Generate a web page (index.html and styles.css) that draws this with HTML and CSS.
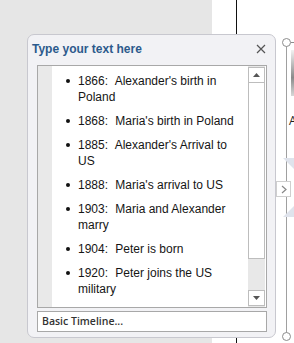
FILE: index.html
```html
<!DOCTYPE html>
<html lang="en">
<head>
  <meta charset="UTF-8" />
  <title>Text Pane - Basic Timeline</title>
  <link rel="stylesheet" href="styles.css">
</head>
<body>

  <div class="stage">
    <div class="page-edge"></div>

    <!-- bits of the SmartArt shape behind the pane -->
    <div class="frame-line"></div>
    <span class="handle handle-top"></span>
    <span class="handle handle-bottom"></span>
    <span class="handle-tick"></span>
    <div class="shade"></div>
    <span class="shape-letter">A</span>
    <svg class="wedge wedge-top" width="11" height="11" viewBox="0 0 11 11"><polygon points="0,0 11,0 11,11" fill="#dfe3ec"/></svg>
    <svg class="wedge wedge-bottom" width="11" height="11" viewBox="0 0 11 11"><polygon points="11,0 11,11 0,11" fill="#dfe3ec"/></svg>
    <div class="pane-toggle">
      <svg width="6" height="9" viewBox="0 0 6 9"><polyline points="1,1 5,4.5 1,8" fill="none" stroke="#888" stroke-width="1.2"/></svg>
    </div>

    <div class="pane">
      <div class="pane-head">
        <h1>Type your text here</h1>
        <button class="close" title="Close">
          <svg width="10" height="10" viewBox="0 0 10 10"><path d="M1 1 L9 9 M9 1 L1 9" stroke="#555" stroke-width="1.2" fill="none"/></svg>
        </button>
      </div>

      <div class="editor">
        <div class="gutter"></div>
        <ul class="bullets">
          <li><span class="yr">1866:</span> Alexander's birth in Poland</li>
          <li><span class="yr">1868:</span> Maria's birth in Poland</li>
          <li><span class="yr">1885:</span> Alexander's Arrival to US</li>
          <li><span class="yr">1888:</span> Maria's arrival to US</li>
          <li><span class="yr">1903:</span> Maria and Alexander marry</li>
          <li><span class="yr">1904:</span> Peter is born</li>
          <li><span class="yr">1920:</span> Peter joins the US military</li>
        </ul>
        <div class="scroll">
          <div class="arrow">
            <svg width="7" height="4" viewBox="0 0 7 4"><polygon points="0,4 7,4 3.5,0" fill="#555"/></svg>
          </div>
          <div class="thumb"></div>
          <div class="track"></div>
          <div class="arrow">
            <svg width="7" height="4" viewBox="0 0 7 4"><polygon points="0,0 7,0 3.5,4" fill="#555"/></svg>
          </div>
        </div>
      </div>

      <div class="layout-name">Basic Timeline...</div>
    </div>
  </div>

</body>
</html>
```

FILE: styles.css
```css
* {
  box-sizing: border-box;
}
body {
  margin: 0;
  font-family: "Open Sans", "Noto Sans", sans-serif;
}
.stage {
  position: relative;
  width: 294px;
  height: 343px;
  overflow: hidden;
  background: linear-gradient(to right, #e6e6e6 212px, #fff 212px);
}
.page-edge {
  position: absolute;
  left: 236px;
  top: 0;
  bottom: 0;
  width: 1px;
  background: #111;
}
.frame-line {
  position: absolute;
  left: 286px;
  top: 46px;
  width: 1px;
  height: 287px;
  background: #a0a0a0;
}
.handle {
  position: absolute;
  left: 282px;
  width: 9px;
  height: 9px;
  border: 1px solid #8c8c8c;
  border-radius: 50%;
  background: #fff;
}
.handle-top {
  top: 38px;
}
.handle-bottom {
  top: 332px;
}
.handle-tick {
  position: absolute;
  left: 291px;
  top: 42px;
  width: 4px;
  height: 1px;
  background: #8c8c8c;
}
.shade {
  position: absolute;
  left: 291px;
  top: 50px;
  width: 4px;
  height: 46px;
  background: linear-gradient(to bottom, #f2f2f2, #8a8a8a 60%, #d8d8d8);
}
.shape-letter {
  position: absolute;
  left: 289px;
  top: 112px;
  font-size: 12px;
  color: #222;
}
.wedge {
  position: absolute;
  left: 283px;
}
.wedge-top {
  top: 158px;
}
.wedge-bottom {
  top: 206px;
}
.pane-toggle {
  position: absolute;
  left: 276px;
  top: 181px;
  width: 15px;
  height: 16px;
  background: #fff;
  border: 1px solid #cfcfcf;
  display: flex;
  align-items: center;
  justify-content: center;
}

.pane {
  position: absolute;
  left: 27px;
  top: 34px;
  width: 249px;
  height: 304px;
  background: #f2f2f5;
  border: 1px solid #c8c8cf;
  border-radius: 7px;
  padding: 0 8px 0 9px;
  display: flex;
  flex-direction: column;
}
.pane-head {
  height: 30px;
  margin-left: -5px;
  padding-bottom: 2px;
  display: flex;
  align-items: center;
  justify-content: space-between;
}
h1 {
  margin: 0;
  font-family: "Liberation Sans", Arial, sans-serif;
  font-size: 12px;
  font-weight: bold;
  color: #2c5a8c;
}
.close {
  border: none;
  background: none;
  padding: 0;
  margin-right: 1px;
  width: 10px;
  height: 10px;
  display: flex;
}
.editor {
  height: 243px;
  border: 1px solid #a8a8a8;
  background: #fff;
  display: flex;
}
.gutter {
  width: 14px;
  background: #e9e9e9;
}
.bullets {
  flex: 1;
  margin: 0;
  padding: 7px 10px 0 0;
  list-style: none;
  font-family: "Liberation Sans", Arial, sans-serif;
  font-size: 12px;
  line-height: 16px;
  color: #151515;
}
.bullets li {
  position: relative;
  padding-left: 26px;
  margin-bottom: 8px;
}
.bullets li::before {
  content: "";
  position: absolute;
  left: 14px;
  top: 6px;
  width: 4px;
  height: 4px;
  border-radius: 50%;
  background: #111;
}
.yr {
  display: inline-block;
  width: 34px;
}
.scroll {
  width: 17px;
  margin-right: 1px;
  padding: 1px 0;
  background: #e8e8e8;
  display: flex;
  flex-direction: column;
}
.arrow {
  height: 16px;
  background: #fff;
  border: 1px solid #bdbdbd;
  display: flex;
  align-items: center;
  justify-content: center;
}
.thumb {
  height: 176px;
  background: #fff;
  border: 1px solid #bdbdbd;
  border-top: none;
}
.track {
  flex: 1;
}
.layout-name {
  margin-top: 3px;
  height: 21px;
  border: 1px solid #a8a8a8;
  background: #fff;
  padding-left: 4px;
  font-size: 10.5px;
  font-weight: 600;
  line-height: 19px;
  color: #333;
}
```
